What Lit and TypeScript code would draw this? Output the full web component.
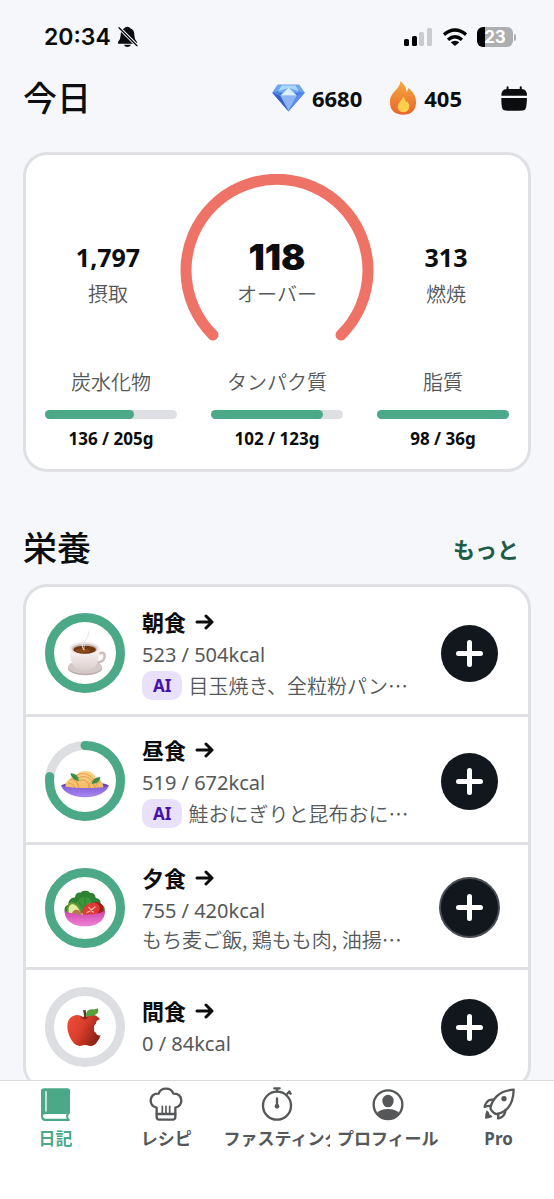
import { LitElement, html, svg, css, nothing, TemplateResult, SVGTemplateResult } from "lit";
import { customElement, property } from "lit/decorators.js";

interface Meal {
  name: string;
  eaten: number;
  goal: number;
  emoji: SVGTemplateResult;
  ai?: boolean;
  items?: string;
  highlighted?: boolean;
}

interface Macro {
  name: string;
  value: number;
  goal: number;
}

interface Tab {
  label: string;
  icon: SVGTemplateResult;
  active?: boolean;
}

const coffee = svg`
  <defs>
    <linearGradient id="cup" x1="0" x2="0" y1="0" y2="1"><stop offset="0" stop-color="#fbf6f5"/><stop offset="1" stop-color="#dccfce"/></linearGradient>
  </defs>
  <ellipse cx="84" cy="130" rx="51" ry="21" fill="#b9aaa8"/>
  <ellipse cx="84" cy="126" rx="51" ry="20" fill="#d5c9c7"/>
  <path d="M122 86q22-8 21 9-2 17-26 18" fill="none" stroke="#cdbfbd" stroke-width="8"/>
  <path d="M38 71q0 44 18 57 12 7 27 7t27-7q18-13 18-57z" fill="url(#cup)"/>
  <ellipse cx="83" cy="70" rx="45" ry="19" fill="#efe8e6"/>
  <ellipse cx="83" cy="71" rx="38" ry="15" fill="#cbbab5"/>
  <ellipse cx="83" cy="74" rx="34" ry="12" fill="#71370f"/>
  <ellipse cx="77" cy="77" rx="22" ry="6" fill="#8b4a1b"/>
  <path d="M93 14q8 14-2 26t-7 31q-8-16 1-27t8-30z" fill="#e6e4e4" opacity=".8"/>
  <path d="M80 46q-10 12 2 29" fill="none" stroke="#eeeaea" stroke-width="4" opacity=".8"/>`;

const pasta = svg`
  <defs>
    <linearGradient id="dish" x1="0" x2="0" y1="0" y2="1"><stop offset="0" stop-color="#7f5bd6"/><stop offset="1" stop-color="#a98af0"/></linearGradient>
    <linearGradient id="noodle" x1="0" x2="0" y1="0" y2="1"><stop offset="0" stop-color="#fbd38a"/><stop offset="1" stop-color="#f2b863"/></linearGradient>
  </defs>
  <ellipse cx="84" cy="98" rx="71" ry="10" fill="#6442b5"/>
  <path d="M25 106q0-24 16-30 4-12 20-12 6-10 26-10 22 0 28 20 22 4 26 33-60 14-116-1z" fill="url(#noodle)"/>
  <g fill="none" stroke="#e2a050" stroke-width="3" stroke-linecap="round">
    <path d="M62 64q32-10 50 18t12 25"/><path d="M64 74q26-10 38 8t13 26"/><path d="M64 84q20-8 28 5t9 20"/>
    <path d="M40 80q22-4 27 28"/><path d="M34 90q16 0 20 17"/><path d="M118 76q-22 6-26 32"/><path d="M132 86q-16 4-20 20"/><path d="M62 66q-10 14 0 30"/>
  </g>
  <path d="M40 60q24 2 26 24-22-2-26-24z" fill="#3f9447"/>
  <path d="M104 92q4-20 26-20-2 22-26 20z" fill="#3f9447"/>
  <path d="M42 65l19 16M107 90l20-16" stroke="#2a7034" stroke-width="2"/>
  <path d="M13 96q6 8 71 9t71-9q0 13-20 25-20 12-51 12t-51-12q-20-12-20-25z" fill="url(#dish)"/>`;

const salad = svg`
  <defs>
    <linearGradient id="bowl" x1="0" x2="0" y1="0" y2="1"><stop offset="0" stop-color="#cf45ad"/><stop offset="1" stop-color="#f082d4"/></linearGradient>
  </defs>
  <path d="M24 100q-6-22 10-26 0-20 20-22 2-16 16-14 6-7 14-6 10-1 16 7 14-2 16 14 18 4 14 20 18 4 12 27z" fill="#2f8233"/>
  <path d="M54 92q-6-22 10-28 4-14 20-12 16-2 18 12 14 6 8 28z" fill="#3c963b"/>
  <path d="M84 54v38M66 66l14 20M104 66L90 86" stroke="#2d7a31" stroke-width="3" fill="none"/>
  <path d="M30 96q-4-26 14-30 22 2 30 32v14H34z" fill="#6b9a2d"/>
  <path d="M35 98q-3-24 12-26 16 3 23 28v12H40z" fill="#e3eca0"/>
  <circle cx="58" cy="102" r="13" fill="#b57a4e"/>
  <path d="M94 112q-22-22 2-38 26-16 40 0 8 14-4 38z" fill="#a51b20"/>
  <ellipse cx="102" cy="90" rx="28" ry="20" transform="rotate(-28 102 90)" fill="#e03a36"/>
  <path d="M90 98q12-6 24-17M96 82q5 8 13 15" stroke="#fbb3a2" stroke-width="4" stroke-linecap="round" fill="none"/>
  <path d="M23 92q22 12 61 12t60-12c1 32-28 47-60 47S22 124 23 92z" fill="url(#bowl)"/>`;

const apple = svg`
  <defs>
    <linearGradient id="skin" x1="0" x2="1" y1="0" y2=".5"><stop offset="0" stop-color="#ef4f3a"/><stop offset=".5" stop-color="#dd3f2d"/><stop offset="1" stop-color="#8f2317"/></linearGradient>
  </defs>
  <path d="M82 56q-16-12-32-6-20 8-19 34 1 24 17 46 12 15 30 9 6-2 12 0 20 6 30-10 8-10 11-20-12 2-14-8-9-3-5-12-4-10 5-15-1-9 12-13-8-12-21-14-13-2-26 9z" fill="url(#skin)"/>
  <path d="M68 50q12 8 28 2-4 10-13 10T68 50z" fill="#a52a1c"/>
  <path d="M78 34l8-1q2 12 1 24h-6q0-14-3-23z" fill="#5d3320"/>
  <path d="M86 50q2-20 20-19 10 1 17-3 4 16-10 20-14 6-27 2z" fill="#55a03c"/>`;

const bookIcon = svg`
  <path d="M14 4h74q8 0 8 8v66q0 3-3 3-5 9 0 15 3 0 3 3t-3 3H22Q9 102 9 88V12q0-8 9-8z" fill="#4ba987"/>
  <path d="M24 14v58" stroke="#fff" stroke-width="4" stroke-linecap="round"/>
  <path d="M86 81H24q-9 0-9 7t9 7h62q-4-7 0-14z" fill="#fff"/>`;

const chefIcon = svg`
  <g fill="none" stroke="#555758" stroke-width="7" stroke-linejoin="round" stroke-linecap="round">
    <path d="M23 78V62Q5 58 5 40q2-21 24-20Q34 5 51 5t22 15q22-1 24 20 0 18-18 22v28q0 8-8 8H31q-8 0-8-8z"/>
    <path d="M23 81h56"/>
  </g>
  <path d="M40 58v20M51 58v20M62 58v20" stroke="#555758" stroke-width="5" stroke-linecap="round"/>`;

const timerIcon = svg`
  <g fill="none" stroke="#555758" stroke-width="7" stroke-linecap="round">
    <circle cx="51" cy="56" r="42"/><path d="M51 4v9M43 4h16M82 20l7-6M87 14l5 6M51 34v20"/>
  </g>
  <circle cx="51" cy="58" r="7" fill="#555758"/>`;

const profileIcon = svg`
  <circle cx="51" cy="53" r="43" fill="none" stroke="#555758" stroke-width="7"/>
  <ellipse cx="51" cy="42" rx="17" ry="19" fill="#555758"/>
  <path d="M18 78q10-12 33-12t33 12q-12 20-33 20T18 78z" fill="#555758"/>`;

const rocketIcon = svg`
  <g fill="none" stroke="#555758" stroke-width="7" stroke-linejoin="round" stroke-linecap="round">
    <path d="M95 8Q62 10 44 28 30 42 26 60q-2 6 4 12l6 6q5 4 11 3 18-4 30-17Q94 44 95 8z"/>
    <path d="M36 38q-16-2-22 8-6 8-6 14 9-4 18-3M70 70q0 12-8 18-6 5-14 6 2-8 0-14"/>
  </g>
  <circle cx="66" cy="35" r="8" fill="#555758"/>
  <path d="M14 70q-6 12-5 25 12 0 22-5-2-7-8-7-1-9-9-13z" fill="#555758"/>`;

const meals: Meal[] = [
  { name: "朝食", eaten: 523, goal: 504, emoji: coffee, ai: true, items: "目玉焼き、全粒粉パン…" },
  { name: "昼食", eaten: 519, goal: 672, emoji: pasta, ai: true, items: "鮭おにぎりと昆布おに…" },
  { name: "夕食", eaten: 755, goal: 420, emoji: salad, items: "もち麦ご飯, 鶏もも肉, 油揚…", highlighted: true },
  { name: "間食", eaten: 0, goal: 84, emoji: apple },
];

const macros: Macro[] = [
  { name: "炭水化物", value: 136, goal: 205 },
  { name: "タンパク質", value: 102, goal: 123 },
  { name: "脂質", value: 98, goal: 36 },
];

const tabs: Tab[] = [
  { label: "日記", icon: bookIcon, active: true },
  { label: "レシピ", icon: chefIcon },
  { label: "ファスティング", icon: timerIcon },
  { label: "プロフィール", icon: profileIcon },
  { label: "Pro", icon: rocketIcon },
];

const percent = (value: number, goal: number) => Math.min(100, Math.round((value / goal) * 100));

@customElement("status-bar")
class StatusBar extends LitElement {
  static styles = css`
    :host {
      display: flex;
      align-items: center;
      justify-content: space-between;
      height: 74px;
      padding: 0 15px 0 21px;
      box-sizing: border-box;
      font-family: Inter, sans-serif;
      color: #0b0c0e;
    }
    .side {
      display: flex;
      align-items: center;
      gap: 10px;
    }
    .clock {
      gap: 7px;
      font-size: 23px;
      font-weight: 600;
    }
    .battery {
      display: flex;
      align-items: center;
      gap: 1px;
    }
    .level {
      width: 36px;
      height: 20px;
      border-radius: 6px;
      background: linear-gradient(90deg, #000 23%, #adaeb0 23%);
      color: #fff;
      font-size: 17px;
      font-weight: 700;
      line-height: 20px;
      text-align: center;
    }
    .nub {
      width: 2px;
      height: 7px;
      border-radius: 0 2px 2px 0;
      background: #adaeb0;
    }
    svg {
      display: block;
    }
  `;

  render() {
    return html`
      <div class="side clock">
        <span>20:34</span>
        <svg width="20" height="22" viewBox="352 79 60 66" aria-hidden="true">
          <path d="M380 81q7 0 9 5 12 4 12 20 0 13 8 21 2 4-2 5h-53q-4-1-2-5 8-8 8-21 0-16 11-20 2-5 9-5zM370 135h21q-3 7-11 7t-10-7z" fill="#0b0c0e" />
          <path d="M355 84l54 54" stroke="#f5f7fa" stroke-width="10" />
          <path d="M355 84l54 54" stroke="#0b0c0e" stroke-width="4" stroke-linecap="round" />
        </svg>
      </div>
      <div class="side">
        <svg width="29" height="19" viewBox="0 0 29 19" aria-hidden="true">
          <rect x="0" y="11" width="5" height="7" rx="1.5" fill="#000" />
          <rect x="8" y="8" width="5" height="10" rx="1.5" fill="#000" />
          <rect x="15" y="4" width="5" height="14" rx="1.5" fill="#c9cbce" />
          <rect x="23" y="0" width="5" height="18" rx="1.5" fill="#c9cbce" />
        </svg>
        <svg width="24" height="18" viewBox="550 82 72 54" aria-hidden="true">
          <g fill="none" stroke="#000" stroke-width="10">
            <path d="M553 102q33-28 66 0" />
            <path d="M565 117q21-18 42 0" />
          </g>
          <path d="M573 125q13-10 26 0l-13 11z" fill="#000" />
        </svg>
        <div class="battery"><div class="level">23</div><div class="nub"></div></div>
      </div>
    `;
  }
}

@customElement("day-summary")
class DaySummary extends LitElement {
  static styles = css`
    :host {
      display: block;
      padding: 19px 0 18px;
      border: 3px solid #dee0e4;
      border-radius: 24px;
      background: #fff;
      text-align: center;
    }
    .energy {
      display: grid;
      grid-template-columns: 1fr 194px 1fr;
      padding: 0 10px;
    }
    .gauge {
      display: grid;
    }
    .gauge > * {
      grid-area: 1 / 1;
    }
    .figure {
      padding-top: 65px;
    }
    .number {
      font-size: 25px;
      font-weight: 700;
      line-height: 36px;
      color: #0b0d0e;
    }
    .main {
      font-family: Inter, sans-serif;
      font-size: 36px;
      font-weight: 900;
    }
    .label {
      font-size: 20px;
      font-weight: 350;
      line-height: 28px;
      color: #55585a;
    }
    .figure .label {
      padding-top: 6px;
    }
    .macros {
      display: grid;
      grid-template-columns: repeat(3, 1fr);
      gap: 34px;
      padding: 27px 19px 0;
    }
    .bar {
      height: 9px;
      margin: 13px 0 8px;
      border-radius: 5px;
      background: #dddfe2;
    }
    .fill {
      height: 9px;
      max-width: 100%;
      border-radius: 5px;
      background: #4ba987;
    }
    .amount {
      font-size: 17px;
      font-weight: 700;
      line-height: 24px;
      color: #0b0d0e;
    }
  `;

  private figure(value: string, label: string, main = false): TemplateResult {
    return html`<div class="figure">
      <div class="number ${main ? "main" : ""}">${value}</div>
      <div class="label">${label}</div>
    </div>`;
  }

  render() {
    return html`
      <div class="energy">
        ${this.figure("1,797", "摂取")}
        <div class="gauge">
          <svg width="194" height="168" viewBox="0 0 194 168" aria-hidden="true">
            <path d="M33 161A91 91 0 1 1 161 161" fill="none" stroke="#ee7265" stroke-width="11" stroke-linecap="round" />
          </svg>
          ${this.figure("118", "オーバー", true)}
        </div>
        ${this.figure("313", "燃焼")}
      </div>
      <div class="macros">
        ${macros.map(
          (m) => html`<div>
            <div class="label">${m.name}</div>
            <div class="bar"><div class="fill" style="width:calc(${percent(m.value, m.goal)}% + 2px)"></div></div>
            <div class="amount">${m.value} / ${m.goal}g</div>
          </div>`
        )}
      </div>
    `;
  }
}

@customElement("meal-row")
class MealRow extends LitElement {
  @property({ attribute: false }) meal!: Meal;

  static styles = css`
    :host {
      display: flex;
      align-items: center;
      padding: 17px 30px 14px 19px;
    }
    .ring {
      display: grid;
      flex: none;
      place-items: center;
      margin-right: 17px;
    }
    .ring > * {
      grid-area: 1 / 1;
    }
    .info {
      flex: 1;
      min-width: 0;
    }
    .name {
      display: flex;
      align-items: center;
      gap: 9px;
      color: #0b0d0e;
      font-size: 22px;
      font-weight: 700;
      line-height: 32px;
      text-decoration: none;
    }
    .energy {
      font-size: 20px;
      line-height: 33px;
      color: #55585a;
    }
    .items {
      display: flex;
      align-items: center;
      gap: 6px;
      min-height: 26px;
      font-family: "Noto Sans CJK JP", sans-serif;
      font-size: 20px;
      font-weight: 350;
      line-height: 26px;
      color: #55585a;
      white-space: nowrap;
    }
    .badge {
      padding: 0 11px;
      border-radius: 10px;
      background: #e9e1fb;
      color: #4510ac;
      font-family: "Noto Sans", sans-serif;
      font-size: 17px;
      font-weight: 700;
      line-height: 29px;
    }
    .add {
      display: grid;
      flex: none;
      place-items: center;
      width: 57px;
      height: 57px;
      padding: 0;
      border: 0;
      border-radius: 50%;
      background: #12171e;
    }
    .highlighted {
      box-shadow: 0 0 0 2px #4a4d53;
    }
  `;

  render() {
    const { name, eaten, goal, emoji, ai, items, highlighted } = this.meal;
    const done = percent(eaten, goal);
    return html`
      <div class="ring">
        <svg width="80" height="80" viewBox="0 0 80 80" aria-hidden="true">
          <g fill="none" stroke-width="9" transform="rotate(-90 40 40)">
            <circle cx="40" cy="40" r="35.5" stroke="#dcdee2" />
            ${done > 0
              ? svg`<circle cx="40" cy="40" r="35.5" stroke="#4ba987" stroke-linecap="round" pathLength="100" stroke-dasharray="${done} 100"/>`
              : nothing}
          </g>
        </svg>
        <svg width="56" height="56" viewBox="0 0 168 168" aria-hidden="true">${emoji}</svg>
      </div>
      <div class="info">
        <a class="name" href="#">
          <span>${name}</span>
          <svg width="20" height="16" viewBox="0 0 20 16" aria-hidden="true">
            <path d="M2 8h15M11 2l6 6-6 6" fill="none" stroke="#0b0d0e" stroke-width="3" stroke-linecap="round" stroke-linejoin="round" />
          </svg>
        </a>
        <div class="energy">${eaten} / ${goal}kcal</div>
        ${items
          ? html`<div class="items">${ai ? html`<span class="badge">AI</span>` : nothing}<span>${items}</span></div>`
          : nothing}
      </div>
      <button class="add ${highlighted ? "highlighted" : ""}" aria-label="${name}を追加">
        <svg width="27" height="27" viewBox="0 0 27 27" aria-hidden="true">
          <path d="M13.5 2.5v22M2.5 13.5h22" stroke="#fff" stroke-width="5" stroke-linecap="round" />
        </svg>
      </button>
    `;
  }
}

@customElement("app-root")
class AppRoot extends LitElement {
  static styles = css`
    :host {
      display: flex;
      flex-direction: column;
      height: 100vh;
      background: #f5f7fa;
      font-family: "Noto Sans", "Noto Sans CJK JP", sans-serif;
      color: #0b0d0e;
    }
    .page {
      flex: 1;
      min-height: 0;
      overflow-y: auto;
      scrollbar-width: none;
      padding: 0 23px;
    }
    .head {
      display: flex;
      align-items: center;
      height: 48px;
      margin-bottom: 30px;
    }
    .title {
      flex: 1;
      margin: 0;
      font-size: 34px;
      font-weight: 500;
      line-height: 48px;
    }
    .stat {
      display: flex;
      align-items: center;
      gap: 7px;
      margin-right: 27px;
      padding: 0;
      border: 0;
      background: none;
      color: inherit;
      font-family: inherit;
      font-size: 22px;
      font-weight: 700;
    }
    .calendar {
      margin: 0 4px 0 12px;
      padding: 0;
      border: 0;
      background: none;
    }
    .head svg {
      display: block;
    }
    .section {
      display: flex;
      align-items: center;
      margin: 52px 0 12px;
    }
    .more {
      margin-right: 12px;
      color: #1f5b49;
      font-size: 22px;
      font-weight: 700;
      text-decoration: none;
    }
    .meals {
      padding: 2px 0 6px;
      border: 3px solid #dee0e4;
      border-radius: 24px;
      background: #fff;
      margin-bottom: 24px;
    }
    .row + .row {
      border-top: 3px solid #dee0e4;
    }
    .tabs {
      display: grid;
      grid-template-columns: repeat(5, minmax(0, 1fr));
      height: 119px;
      box-sizing: border-box;
      padding-top: 6px;
      border-top: 1px solid #d7d9dc;
      background: #fff;
    }
    .tab {
      display: flex;
      flex-direction: column;
      align-items: center;
      gap: 6px;
      padding: 0 2px;
      color: #55585a;
      text-decoration: none;
    }
    .active {
      color: #4ba987;
    }
    .text {
      max-width: 100%;
      overflow: hidden;
      font-size: 17px;
      font-weight: 700;
      line-height: 24px;
      white-space: nowrap;
    }
  `;

  render() {
    return html`
      <main class="page">
        <status-bar></status-bar>
        <header class="head">
          <h1 class="title">今日</h1>
          <button class="stat">
            <svg width="33" height="28" viewBox="33 255 100 84" aria-hidden="true">
              <path d="M50 257h65l17 24-49 57-49-57z" fill="#3f76dc" />
              <path d="M50 257h65l17 24H34z" fill="#6fa8f2" />
              <path d="M62 259h42l10 17-31-9-31 9z" fill="#a9dafb" />
              <path d="M83 266l26 24H58z" fill="#d9f1fe" />
              <path d="M34 281l18-5 6 15z" fill="#4f86e6" />
              <path d="M132 281l-18-5-6 15z" fill="#4f86e6" />
              <path d="M58 290h51l-26 46z" fill="#8fb4f5" />
              <path d="M34 281l24 10 25 46z" fill="#3560cc" />
              <path d="M132 281l-23 10-26 46z" fill="#5c8eea" />
            </svg>
            <span>6680</span>
          </button>
          <button class="stat">
            <svg width="28" height="34" viewBox="386 245 82 101" aria-hidden="true">
              <defs>
                <linearGradient id="flame" x1="0" x2="0" y1="0" y2="1"><stop offset="0" stop-color="#f6a93c" /><stop offset="1" stop-color="#e9642f" /></linearGradient>
              </defs>
              <path d="M420 245q17 16 18 34 2-8 6-13 23 22 22 42-2 37-39 37t-39-36q-1-17 13-32 16-15 19-32z" fill="url(#flame)" />
              <path d="M427 291q8 8 10 18l3-4q8 10 5 20-4 13-17 13t-17-14q-1-10 8-18 6-6 8-15z" fill="#fcd04b" />
            </svg>
            <span>405</span>
          </button>
          <button class="calendar" aria-label="カレンダー">
            <svg width="26" height="25" viewBox="723 255 79 75" aria-hidden="true">
              <path d="M724 284q0-19 16-20v-6q0-3 3-3t3 3v6h34v-6q0-3 3-3t3 3v6q16 1 16 20z" fill="#0b0d0e" />
              <path d="M724 291h78q-1 20-3 29-2 9-10 9-26 2-52 0-9 0-11-9-2-9-2-29z" fill="#0b0d0e" />
            </svg>
          </button>
        </header>
        <day-summary></day-summary>
        <div class="section">
          <h2 class="title">栄養</h2>
          <a class="more" href="#">もっと</a>
        </div>
        <section class="meals">
          ${meals.map((meal) => html`<div class="row"><meal-row .meal=${meal}></meal-row></div>`)}
        </section>
      </main>
      <nav class="tabs">
        ${tabs.map(
          (tab) => html`<a class="tab ${tab.active ? "active" : ""}" href="#">
            <svg width="34" height="34" viewBox="0 0 102 102" aria-hidden="true">${tab.icon}</svg>
            <span class="text">${tab.label}</span>
          </a>`
        )}
      </nav>
    `;
  }
}
